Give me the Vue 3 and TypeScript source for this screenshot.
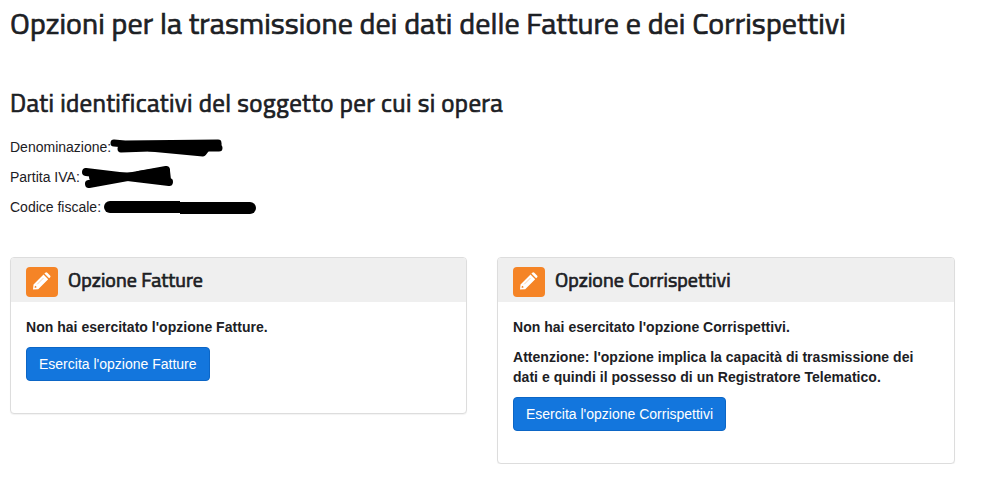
<script setup lang="ts">
interface Field {
  label: string
  width: number
  height: number
  strokes: { d: string; w: number }[]
  kind: string
}

interface Option {
  title: string
  messages: string[]
  action: string
}

const fields: Field[] = [
  {
    label: 'Denominazione:',
    kind: 'name',
    width: 114,
    height: 20,
    strokes: [
      { d: 'M4 6L15 7L108 6', w: 7 },
      { d: 'M11 12L40 11L109 11', w: 7 },
      { d: 'M12 9L108 8', w: 7 },
      { d: 'M40 11L93 16L96 12', w: 7 },
    ],
  },
  {
    label: 'Partita IVA:',
    kind: 'vat',
    width: 94,
    height: 24,
    strokes: [
      { d: 'M5 7L88 17', w: 8 },
      { d: 'M8 19L85 5', w: 8 },
      { d: 'M12 12L84 11', w: 8 },
      { d: 'M58 10L85 6L86 15L58 12', w: 8 },
    ],
  },
  {
    label: 'Codice fiscale:',
    kind: 'tax',
    width: 154,
    height: 14,
    strokes: [
      { d: 'M7 7H72', w: 12 },
      { d: 'M82 8H147', w: 12 },
    ],
  },
]

const options: Option[] = [
  {
    title: 'Opzione Fatture',
    messages: ["Non hai esercitato l'opzione Fatture."],
    action: "Esercita l'opzione Fatture",
  },
  {
    title: 'Opzione Corrispettivi',
    messages: [
      "Non hai esercitato l'opzione Corrispettivi.",
      "Attenzione: l'opzione implica la capacità di trasmissione dei dati e quindi il possesso di un Registratore Telematico.",
    ],
    action: "Esercita l'opzione Corrispettivi",
  },
]
</script>

<template>
  <main class="page">
    <h1>Opzioni per la trasmissione dei dati delle Fatture e dei Corrispettivi</h1>
    <h2>Dati identificativi del soggetto per cui si opera</h2>

    <section class="fields">
      <p v-for="f in fields" :key="f.label" class="field">
        <span>{{ f.label }}</span>
        <svg :class="['mask', f.kind]" :width="f.width" :height="f.height" :viewBox="`0 0 ${f.width} ${f.height}`" aria-hidden="true">
          <path v-for="s in f.strokes" :key="s.d" :d="s.d" :stroke-width="s.w" />
          <path v-if="f.kind === 'tax'" d="M70 7H77M77 8H84" stroke-width="12" class="flat" />
        </svg>
      </p>
    </section>

    <section class="options">
      <article v-for="o in options" :key="o.title" class="panel">
        <header class="panel-head">
          <span class="badge">
            <svg width="18" height="18" viewBox="0 0 18 18" aria-hidden="true">
              <path class="pencil" fill-rule="evenodd" d="M0 17.500L.5 12.500L10.500 2.500L15.200 7.200L5.200 17.200ZM1.700 14.400L1.600 15.800L3 15.700L3.700 15L2.400 13.700Z" />
              <path class="pencil" d="M11.400 1.600L12.300.7Q13.300-.3 14.300.7L17 3.400Q18 4.400 17 5.400L16.100 6.300Z" />
              <path class="edge" d="M4.200 12.300L10.400 6.100" />
            </svg>
          </span>
          <h3>{{ o.title }}</h3>
        </header>
        <div class="panel-body">
          <p v-for="m in o.messages" :key="m">{{ m }}</p>
          <button type="button">{{ o.action }}</button>
        </div>
      </article>
    </section>
  </main>
</template>

<style>
body {
  margin: 0;
  background: #fff;
}
</style>

<style scoped>
.page {
  box-sizing: border-box;
  width: 955px;
  padding: 7px 0 0 10px;
  color: #1c2024;
  font: 14px/20px "Liberation Sans", Arial, sans-serif;
}

h1,
h2,
h3 {
  margin: 0;
  font-family: "Titillium Web", Roboto, sans-serif;
  font-weight: 400;
  white-space: nowrap;
  -webkit-text-stroke: 0.7px currentColor;
}

h1 {
  font-size: 30px;
  line-height: 33px;
  letter-spacing: 0.09px;
}

h2 {
  margin-top: 50px;
  font-size: 25px;
  line-height: 27px;
  letter-spacing: 0.35px;
}

.fields {
  display: grid;
  gap: 10px;
  margin-top: 20px;
}

.field {
  display: flex;
  align-items: center;
  height: 20px;
  margin: 0;
}

.mask {
  flex: none;
  overflow: visible;
  fill: none;
  stroke: #000;
  stroke-linecap: round;
  stroke-linejoin: round;
}

.flat {
  stroke-linecap: butt;
}

.name {
  margin-left: -1px;
}

.vat {
  margin-left: 1px;
}

.tax {
  margin-left: 2px;
}

.options {
  display: grid;
  grid-template-columns: 457px 458px;
  align-items: start;
  gap: 30px;
  margin-top: 40px;
}

.panel {
  border: 1px solid #ddd;
  border-radius: 4px;
  background: #fff;
  box-shadow: 0 1px 1px rgba(0, 0, 0, 0.05);
  overflow: hidden;
}

.panel-head {
  display: flex;
  align-items: center;
  gap: 10px;
  box-sizing: border-box;
  height: 44px;
  padding: 4px 15px 0;
  background: #efefef;
}

.badge {
  display: flex;
  align-items: center;
  justify-content: center;
  box-sizing: border-box;
  width: 32px;
  height: 30px;
  padding-bottom: 2px;
  border-radius: 4px;
  background: #f58426;
}

.pencil {
  fill: #fff;
}

.edge {
  fill: none;
  stroke: #f58426;
  stroke-width: 0.4;
}

h3 {
  padding-bottom: 4px;
  font-size: 20px;
  line-height: 22px;
  letter-spacing: 0.04px;
}

.panel-body {
  padding: 15px 15px 32px;
}

.panel-body p {
  margin: 0 0 10px;
  font-weight: 700;
  letter-spacing: 0.03px;
}

button {
  display: block;
  padding: 6px 12px;
  border: 1px solid #0c66c6;
  border-radius: 4px;
  background: #1376dd;
  color: #fff;
  font: inherit;
}
</style>
